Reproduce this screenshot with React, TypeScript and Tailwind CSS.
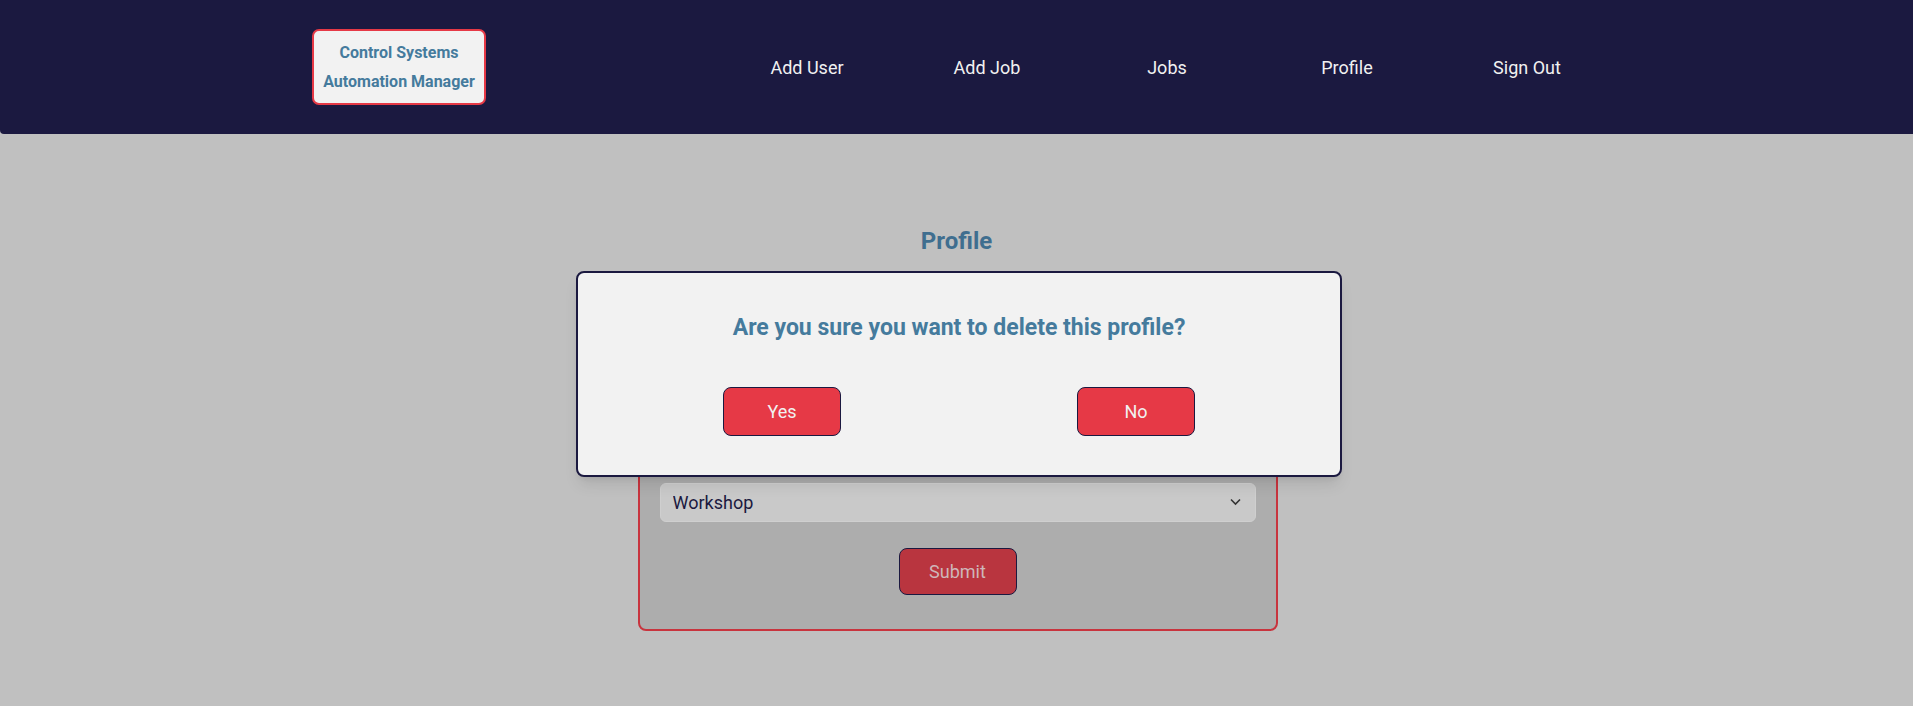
import React from 'react';

const navItems = ['Add User', 'Add Job', 'Jobs', 'Profile', 'Sign Out'];

function Header() {
  return (
    <header className="flex h-[134px] items-center bg-[#1b1940] pl-[312px] rounded-bl-[4px]">
      <div className="flex w-[174px] flex-col items-center rounded-[7px] border-2 border-[#e63946] bg-[#f2f2f2] py-[7px] text-[16px] font-bold leading-[29px] text-[#457b9d]">
        <span>Control Systems</span>
        <span>Automation Manager</span>
      </div>
      <nav className="ml-[231px] flex">
        {navItems.map((item) => (
          <a key={item} href="#" className="w-[180px] text-center text-[18px] text-[#f1f1f1]">
            {item}
          </a>
        ))}
      </nav>
    </header>
  );
}

function Field({ label, value }: { label: string; value: string }) {
  return (
    <div className="mb-4 flex flex-col gap-1">
      <label className="h-6 text-[16px] text-[#1b1940]">{label}</label>
      <input
        readOnly
        value={value}
        className="h-[39px] rounded-md bg-[#c9c9c9] px-3 text-[18px] text-[#1b1940] outline-none"
      />
    </div>
  );
}

function ConfirmModal() {
  return (
    <div className="absolute left-[576px] top-[137px] flex h-[206px] w-[766px] flex-col items-center rounded-lg border-2 border-[#1b1940] bg-[#f2f2f2] pt-10 shadow-lg">
      <h3 className="text-[23px] font-bold leading-[30px] text-[#457b9d]">
        Are you sure you want to delete this profile?
      </h3>
      <div className="mt-[44px] flex gap-[236px]">
        <button className="h-[49px] w-[118px] rounded-lg border border-[#1b1940] bg-[#e63946] text-[18px] text-[#f1f1f1]">
          Yes
        </button>
        <button className="h-[49px] w-[118px] rounded-lg border border-[#1b1940] bg-[#e63946] text-[18px] text-[#f1f1f1]">
          No
        </button>
      </div>
    </div>
  );
}

export default function App() {
  return (
    <div className="min-h-[706px] bg-[#c0c0c0]" style={{ fontFamily: 'Roboto, "Noto Sans", sans-serif' }}>
      <Header />
      <main className="relative flex flex-col items-center pt-[91px] pb-10">
        <h2 className="mb-[30px] text-[24px] font-bold leading-[32px] text-[#3f6e8f]">Profile</h2>
        <form className="ml-[2px] flex w-[640px] flex-col rounded-lg border-2 border-[#c8343e] bg-[#adadad] px-5 pt-[28px] pb-[34px]">
          <Field label="Name" value="" />
          <Field label="Email" value="" />
          <div className="relative">
            <select
              defaultValue="Workshop"
              className="h-[39px] w-full appearance-none rounded-md border border-[#cfcfcf] bg-[#c9c9c9] px-3 text-[18px] text-[#1b1940] outline-none"
            >
              <option>Workshop</option>
              <option>Office</option>
              <option>Field</option>
            </select>
            <svg
              className="pointer-events-none absolute right-[15px] top-[15px]"
              width="11"
              height="8"
              viewBox="0 0 11 8"
              fill="none"
              stroke="#333"
              strokeWidth="1.6"
            >
              <path d="M1 1.5l4.5 4.5 4.5-4.5" />
            </svg>
          </div>
          <button
            type="button"
            className="mx-auto mt-[26px] h-[47px] w-[118px] rounded-lg border border-[#1b1940] bg-[#b9353f] text-[18px] text-[#cfb6b9]"
          >
            Submit
          </button>
        </form>
        <ConfirmModal />
      </main>
    </div>
  );
}
